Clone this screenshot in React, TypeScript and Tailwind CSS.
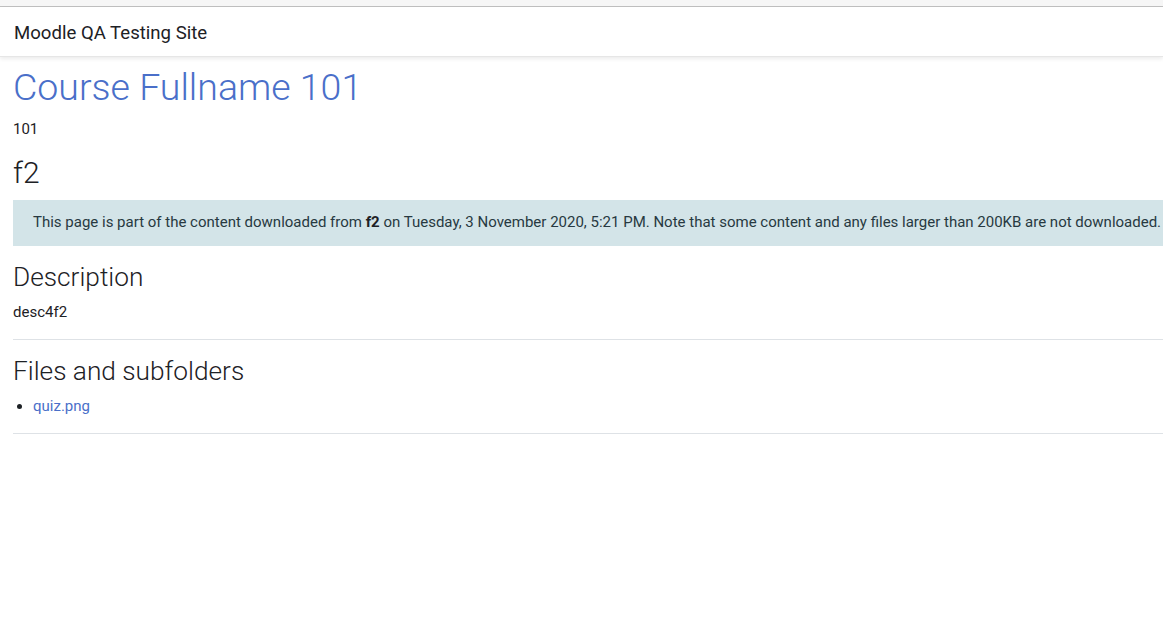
import React from 'react';

const font = { fontFamily: 'Roboto, "Noto Sans", sans-serif' };

export default function App() {
  return (
    <div className="w-[1163px] h-[620px] overflow-hidden bg-white text-[#1d2125]" style={font}>
      {/* browser strip */}
      <div className="h-[7px] bg-[#f6f6f6] border-b border-[#c0c0c0]" />

      {/* navbar */}
      <nav className="h-[50px] flex items-center px-[14px] pt-[5px] bg-white shadow-[0_2px_4px_rgba(0,0,0,0.08)] border-b border-[#e6e6e6]">
        <span className="text-[18.6px] text-[#1d2125]">Moodle QA Testing Site</span>
      </nav>

      <main className="w-[1220px] pl-[13px] pt-[8px]">
        <h1 className="text-[37.5px] font-light leading-[1.2] text-[#4a6fc9]">Course Fullname 101</h1>
        <p className="text-[15px] mt-[8px] leading-[1.5]">101</p>

        <h2 className="text-[30px] font-light leading-[1.2] mt-[14px]">f2</h2>

        <div className="mt-[9px] h-[46px] flex items-center px-[20px] bg-[#d3e4e8] text-[#273941] text-[15px] whitespace-nowrap">
          <span>
            This page is part of the content downloaded from <b className="font-bold text-[#1d2125]">f2</b> on Tuesday, 3 November 2020, 5:21 PM. Note that some content and any files larger than 200KB are not downloaded.
          </span>
        </div>

        <h3 className="text-[26.25px] font-light leading-[1.2] mt-[16px]">Description</h3>
        <p className="text-[15px] mt-[8px] leading-[1.5]">desc4f2</p>
        <hr className="border-t border-[#dee2e6] mt-[15px]" />

        <h3 className="text-[26.25px] font-light leading-[1.2] mt-[16px]">Files and subfolders</h3>
        <ul className="list-disc pl-[20px] mt-[8px] text-[15px] leading-[1.5]">
          <li>
            <a className="text-[#4a6fc9]">quiz.png</a>
          </li>
        </ul>
        <hr className="border-t border-[#dee2e6] mt-[15px]" />
      </main>
    </div>
  );
}
